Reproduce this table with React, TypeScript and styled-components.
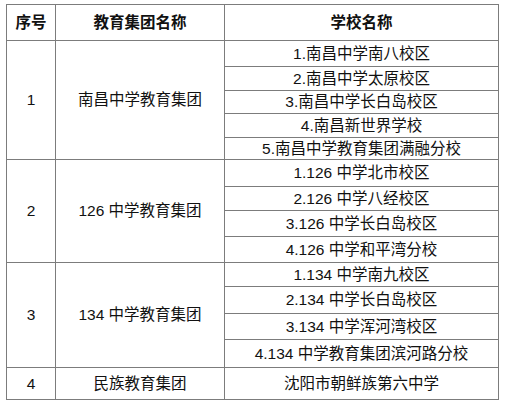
import React from "react";
import styled, { createGlobalStyle } from "styled-components";

const Global = createGlobalStyle`
  html, body { margin: 0; padding: 0; background: #fff; }
  body { font-family: "Liberation Sans", "Noto Sans CJK SC", sans-serif; color: #111; }
`;

const Page = styled.div`
  padding: 4px 0 0 6px;
  background: #fff;
  min-height: 407px;
  box-sizing: border-box;
`;

const Table = styled.table`
  border-collapse: collapse;
  table-layout: fixed;
  width: 492px;
  font-size: 15.5px;
  line-height: 1;
`;

const Col = styled.col<{ $w: number }>`
  width: ${(p) => p.$w}px;
`;

const Row = styled.tr<{ $h: number }>`
  height: ${(p) => p.$h}px;
`;

const Head = styled.th`
  border: 1px solid #7c7c7c;
  font-weight: 700;
  text-align: center;
  vertical-align: middle;
  padding: 0;
`;

const Cell = styled.td`
  border: 1px solid #7c7c7c;
  text-align: center;
  vertical-align: middle;
  padding: 0;
  white-space: nowrap;
`;

type Group = { no: string; name: string; schools: string[]; heights: number[] };

const groups: Group[] = [
  {
    no: "1",
    name: "南昌中学教育集团",
    schools: [
      "1.南昌中学南八校区",
      "2.南昌中学太原校区",
      "3.南昌中学长白岛校区",
      "4.南昌新世界学校",
      "5.南昌中学教育集团满融分校",
    ],
    heights: [26, 24, 23, 24, 22],
  },
  {
    no: "2",
    name: "126 中学教育集团",
    schools: ["1.126 中学北市校区", "2.126 中学八经校区", "3.126 中学长白岛校区", "4.126 中学和平湾分校"],
    heights: [27, 24, 26, 26],
  },
  {
    no: "3",
    name: "134 中学教育集团",
    schools: ["1.134 中学南九校区", "2.134 中学长白岛校区", "3.134 中学浑河湾校区", "4.134 中学教育集团滨河路分校"],
    heights: [24, 27, 26, 28],
  },
  {
    no: "4",
    name: "民族教育集团",
    schools: ["沈阳市朝鲜族第六中学"],
    heights: [32],
  },
];

export default function App() {
  return (
    <Page>
      <Global />
      <Table>
        <colgroup>
          <Col $w={49} />
          <Col $w={169} />
          <Col $w={274} />
        </colgroup>
        <tbody>
          <Row $h={36}>
            <Head>序号</Head>
            <Head>教育集团名称</Head>
            <Head>学校名称</Head>
          </Row>
          {groups.map((g) =>
            g.schools.map((s, i) => (
              <Row key={g.no + "-" + i} $h={g.heights[i]}>
                {i === 0 && (
                  <>
                    <Cell rowSpan={g.schools.length}>{g.no}</Cell>
                    <Cell rowSpan={g.schools.length}>{g.name}</Cell>
                  </>
                )}
                <Cell>{s}</Cell>
              </Row>
            ))
          )}
        </tbody>
      </Table>
    </Page>
  );
}
